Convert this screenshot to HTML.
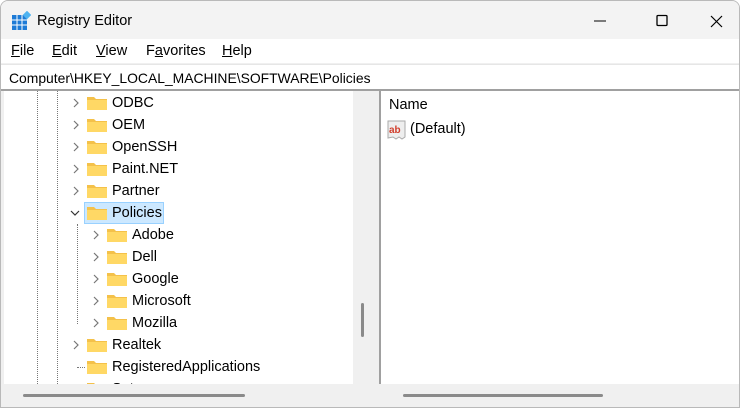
<!DOCTYPE html><html><head><style>
body{margin:0;width:741px;height:409px;overflow:hidden;background:#fff;font-family:"Liberation Sans",sans-serif;font-size:14px;color:#000}
.win{position:absolute;left:0;top:0;width:740px;height:408px;border:1px solid #b9b9b9;border-radius:8px 8px 0 0;background:#f0f0f0;overflow:hidden;box-sizing:border-box}
.title{position:absolute;left:0;top:0;width:100%;height:38px;background:#f3f3f3}
.title span{position:absolute;left:36px;top:12px;font-size:14.5px}
.menu{position:absolute;top:38px;left:0;width:100%;height:24px;background:#fff}
.menu span{position:absolute;top:4px;font-size:14.5px}
.addr{position:absolute;top:63px;left:0;width:100%;height:25px;background:#fff;border-top:1px solid #e6e6e6}
.addr span{position:absolute;left:8px;top:5px;font-size:13.9px}
.line{position:absolute;top:88px;left:0;width:100%;height:2px;background:#a0a0a0}
.tree{position:absolute;left:3px;top:90px;width:349px;height:293px;background:#fff;overflow:hidden}
.vs{position:absolute;left:352px;top:90px;width:20px;height:293px;background:#f0f0f0}
.right{position:absolute;left:378px;top:90px;width:362px;height:293px;background:#fff;border-left:2px solid #a0a0a0}
.row{position:absolute;height:22px;font-size:14.5px;line-height:22px}
.f{position:absolute;top:4px;width:20px;height:14px}
.chev{position:absolute;top:6px;width:10px;height:10px}
.dot{position:absolute;border-left:1px dotted #777;width:0}
</style></head><body><div class="win">
<div class="title">
<svg style="position:absolute;left:10px;top:10px" width="20" height="20" viewBox="0 0 20 20"><rect x="1" y="4" width="15" height="15" fill="#1e7bd6"/><g stroke="#fff" stroke-width="1"><line x1="1" y1="9" x2="16" y2="9"/><line x1="1" y1="14" x2="16" y2="14"/><line x1="6" y1="4" x2="6" y2="19"/><line x1="11" y1="4" x2="11" y2="19"/></g><rect x="13" y="1" width="6" height="6" fill="#4fb3f0" transform="rotate(45 16 4)"/></svg>
<span>Registry Editor</span>
<svg style="position:absolute;left:590px;top:12px" width="140" height="16"><line x1="3" y1="8" x2="15" y2="8" stroke="#000"/><rect x="66" y="2.5" width="10" height="10" fill="none" stroke="#000" stroke-width="1.3" rx="1"/><path d="M120 3L131 14M131 3L120 14" stroke="#000" stroke-width="1.2"/></svg>
</div>
<div class="menu"><span style="left:10px"><u>F</u>ile</span><span style="left:51px"><u>E</u>dit</span><span style="left:95px"><u>V</u>iew</span><span style="left:145px">F<u>a</u>vorites</span><span style="left:221px"><u>H</u>elp</span></div>
<div class="addr"><span>Computer\HKEY_LOCAL_MACHINE\SOFTWARE\Policies</span></div>
<div class="line"></div>
<div class="tree" id="t">
<div class="dot" style="left:33px;top:0;height:293px"></div>
<div class="dot" style="left:53px;top:0;height:293px"></div>
<div class="dot" style="left:73px;top:133px;height:100px"></div>
<div style="position:absolute;left:73px;top:276px;width:8px;border-top:1px dotted #777"></div>
</div>
<div class="vs"><div style="position:absolute;left:8px;top:212px;width:3px;height:34px;background:#8a8a8a;border-radius:2px"></div></div>
<div class="right">
<div style="position:absolute;left:8px;top:6px;font-size:14.5px">Name</div>
<svg style="position:absolute;left:6px;top:29px" width="20" height="20" viewBox="0 0 20 20"><path d="M1 1h17v16l-3 2l-3-2l-3 2l-3-2l-5 1z" fill="#eee" stroke="#aaa"/><text x="2" y="13" font-size="10" font-weight="bold" fill="#d03c2a" font-family="Liberation Sans">ab</text></svg>
<div style="position:absolute;left:29px;top:30px;font-size:14.5px">(Default)</div>
</div>
<div style="position:absolute;left:22px;top:393px;width:222px;height:3px;background:#8a8a8a;border-radius:2px"></div>
<div style="position:absolute;left:402px;top:393px;width:200px;height:3px;background:#8a8a8a;border-radius:2px"></div>
</div>
<script>
var items=[["ODBC",1,">"],["OEM",1,">"],["OpenSSH",1,">"],["Paint.NET",1,">"],["Partner",1,">"],["Policies",1,"v"],["Adobe",2,">"],["Dell",2,">"],["Google",2,">"],["Microsoft",2,">"],["Mozilla",2,">"],["Realtek",1,">"],["RegisteredApplications",1,""],["Setup",1,">"]];
var t=document.getElementById('t'),h='';
items.forEach(function(it,i){var y=i*22+1;var x=it[1]==1?0:20;
var c='';if(it[2]=='>')c='<svg class="chev" style="left:'+(67+x)+'px" viewBox="0 0 10 10"><path d="M3 1L7 5L3 9" fill="none" stroke="#777" stroke-width="1.2"/></svg>';
else if(it[2]=='v')c='<svg class="chev" style="left:'+(66+x)+'px" viewBox="0 0 10 10"><path d="M1 3L5 7L9 3" fill="none" stroke="#333" stroke-width="1.2"/></svg>';
var sel=it[0]=='Policies'?'<div style="position:absolute;left:'+(80+x)+'px;top:0;width:78px;height:20px;background:#cce8ff;border:1px solid #99d1ff"></div>':'';
h+='<div class="row" style="left:0;top:'+y+'px;width:349px">'+sel+c+'<svg class="f" style="left:'+(83+x)+'px" viewBox="0 0 20 14"><path d="M0 1h7l2 2h11v11H0z" fill="#f4c14a"/><rect x="0" y="4" width="20" height="10" fill="#ffd865"/></svg><span style="position:absolute;left:'+(108+x)+'px">'+it[0]+'</span></div>';});
t.insertAdjacentHTML('beforeend',h);
</script>
</body></html>
